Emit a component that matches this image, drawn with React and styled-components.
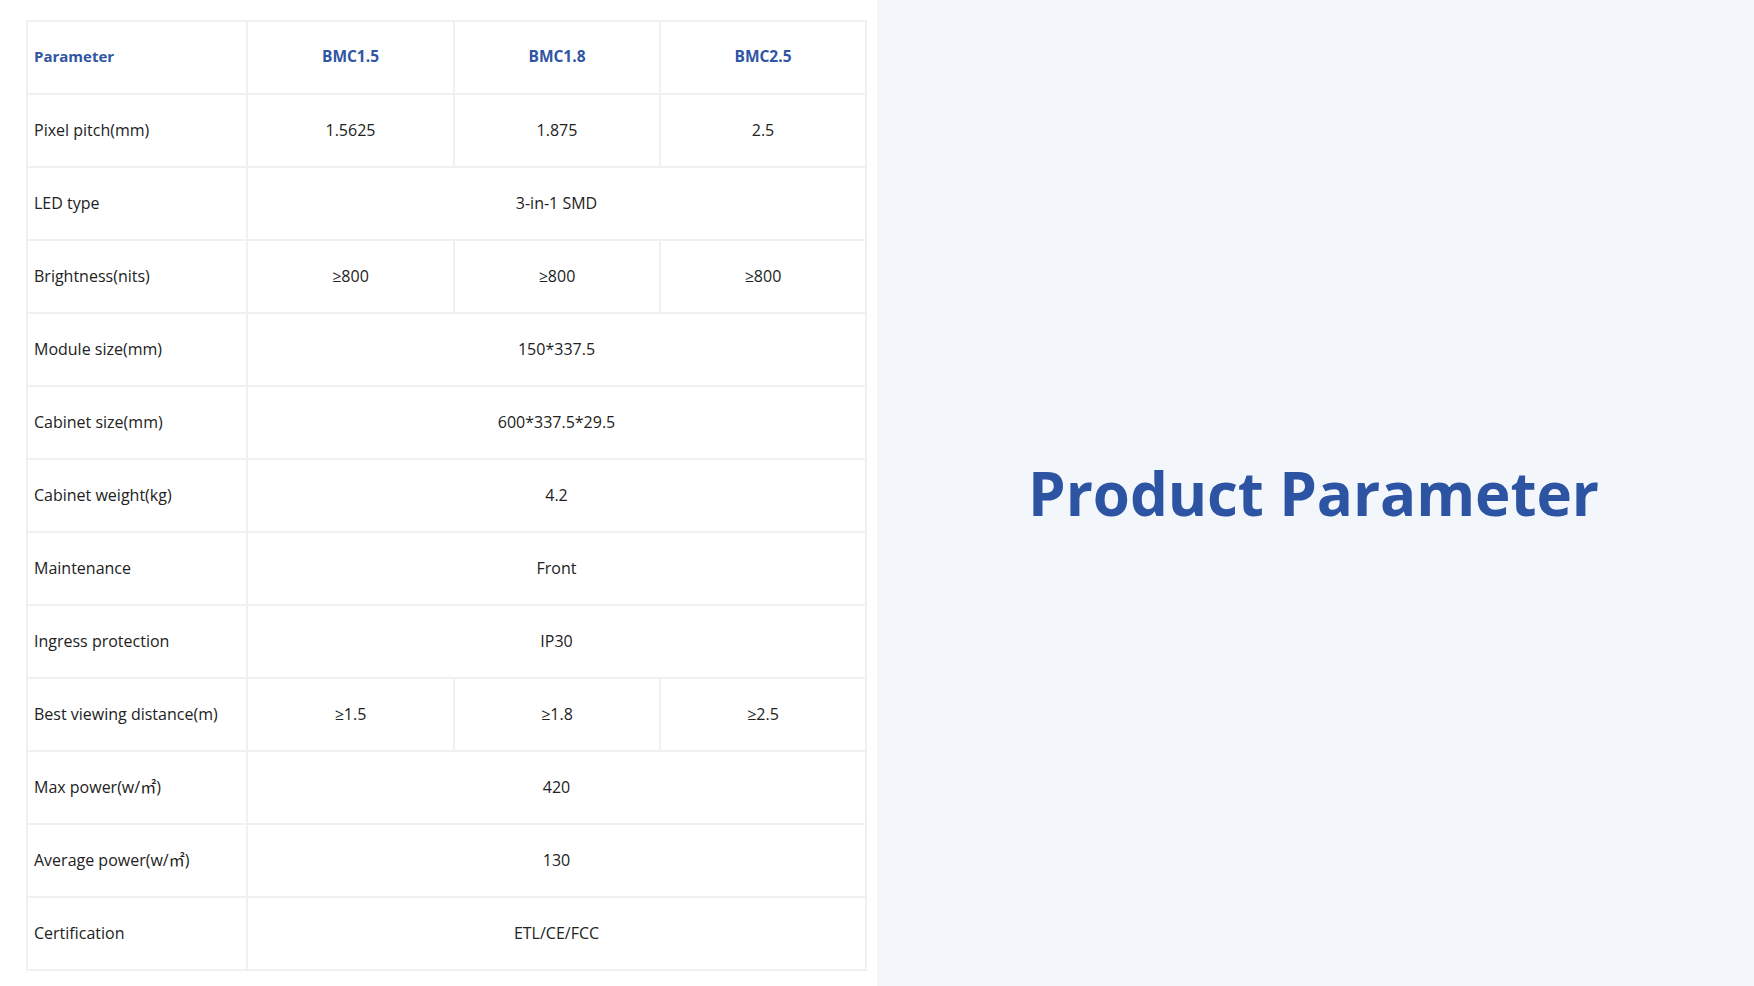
import React from 'react';
import styled, { createGlobalStyle } from 'styled-components';

const GlobalStyle = createGlobalStyle`
  html, body {
    margin: 0;
    padding: 0;
    background: #ffffff;
  }
  body {
    font-family: "Open Sans", "Noto Sans", "Noto Sans CJK SC", sans-serif;
    color: #222222;
  }
`;

const Page = styled.div`
  display: grid;
  grid-template-columns: 877px 1fr;
  width: 1754px;
  height: 986px;
`;

const TablePane = styled.div`
  background: #ffffff;
  padding: 20px 0 0 26px;
`;

const SpecTable = styled.table`
  width: 839px;
  border-collapse: collapse;
  table-layout: fixed;
  border: 2px solid #f0f0f0;
`;

const Row = styled.tr`
  height: 73px;
`;

const Cell = styled.td`
  border: 2px solid #f0f0f0;
  padding: 0 6px;
  font-size: 16px;
  line-height: 1.2;
  color: #222222;
  text-align: ${props => (props.$label ? 'left' : 'center')};
  vertical-align: middle;
`;

const HeadCell = styled.th`
  border: 2px solid #f0f0f0;
  padding: 0 6px 4px;
  font-size: ${props => (props.$label ? '15px' : '15.5px')};
  font-weight: 700;
  color: #2f55a4;
  text-align: ${props => (props.$label ? 'left' : 'center')};
  vertical-align: middle;
`;

const TitlePane = styled.div`
  background: #f3f6fb;
  display: flex;
  align-items: center;
  justify-content: center;
`;

const Title = styled.h1`
  margin: 0 0 0 -4px;
  font-family: "Open Sans", "Noto Sans", sans-serif;
  font-size: 60px;
  font-weight: 700;
  color: #2d54a3;
  letter-spacing: -0.1px;
`;

const rows = [
  ['Pixel pitch(mm)', ['1.5625', '1.875', '2.5']],
  ['LED type', '3-in-1 SMD'],
  ['Brightness(nits)', ['≥800', '≥800', '≥800']],
  ['Module size(mm)', '150*337.5'],
  ['Cabinet size(mm)', '600*337.5*29.5'],
  ['Cabinet weight(kg)', '4.2'],
  ['Maintenance', 'Front'],
  ['Ingress protection', 'IP30'],
  ['Best viewing distance(m)', ['≥1.5', '≥1.8', '≥2.5']],
  ['Max power(w/㎡)', '420'],
  ['Average power(w/㎡)', '130'],
  ['Certification', 'ETL/CE/FCC'],
];

function App() {
  return (
    <>
      <GlobalStyle />
      <Page>
        <TablePane>
          <SpecTable>
            <colgroup>
              <col style={{ width: 220 }} />
              <col style={{ width: 207 }} />
              <col style={{ width: 206 }} />
              <col style={{ width: 206 }} />
            </colgroup>
            <thead>
              <Row>
                <HeadCell $label>Parameter</HeadCell>
                <HeadCell>BMC1.5</HeadCell>
                <HeadCell>BMC1.8</HeadCell>
                <HeadCell>BMC2.5</HeadCell>
              </Row>
            </thead>
            <tbody>
              {rows.map(([label, value]) => (
                <Row key={label}>
                  <Cell $label>{label}</Cell>
                  {Array.isArray(value)
                    ? value.map((v, i) => <Cell key={i}>{v}</Cell>)
                    : <Cell colSpan={3}>{value}</Cell>}
                </Row>
              ))}
            </tbody>
          </SpecTable>
        </TablePane>
        <TitlePane>
          <Title>Product Parameter</Title>
        </TitlePane>
      </Page>
    </>
  );
}

export default App;
